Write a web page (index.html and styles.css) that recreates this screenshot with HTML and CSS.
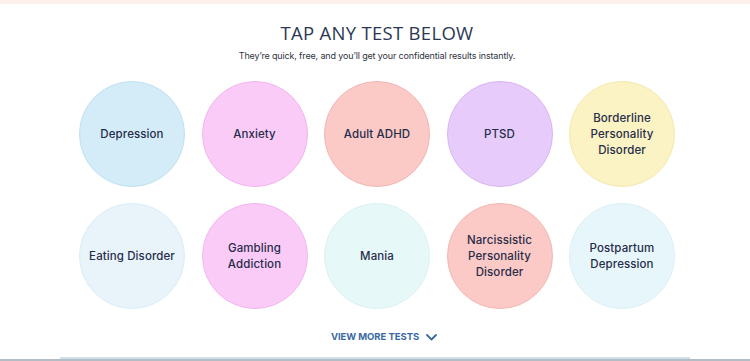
FILE: index.html
```html
<!DOCTYPE html>
<html>
<head>
<meta charset="utf-8">
<link rel="stylesheet" href="styles.css">
</head>
<body>
<div class="topbar"></div>
<section class="tests">
  <h1 class="title">TAP ANY TEST BELOW</h1>
  <p class="subtitle">They’re quick, free, and you’ll get your confidential results instantly.</p>
  <div class="grid">
    <a class="circle c-blue">Depression</a>
    <a class="circle c-pink">Anxiety</a>
    <a class="circle c-salmon">Adult ADHD</a>
    <a class="circle c-purple">PTSD</a>
    <a class="circle c-yellow">Borderline<br>Personality<br>Disorder</a>
    <a class="circle c-ice">Eating Disorder</a>
    <a class="circle c-pink">Gambling<br>Addiction</a>
    <a class="circle c-mint">Mania</a>
    <a class="circle c-salmon">Narcissistic<br>Personality<br>Disorder</a>
    <a class="circle c-ice2">Postpartum<br>Depression</a>
  </div>
  <div class="more">
    <span>VIEW MORE TESTS</span>
    <svg class="chev" width="11" height="7" viewBox="0 0 11 7"><path d="M1 1 L5.5 5.5 L10 1" fill="none" stroke="#3a6aa0" stroke-width="1.8" stroke-linecap="round" stroke-linejoin="round"/></svg>
  </div>
</section>
<div class="bottom">
  <div class="card-top"></div>
</div>
</body>
</html>
```
FILE: styles.css
```css
html, body {
  margin: 0;
  padding: 0;
  background: #ffffff;
}
body {
  width: 750px;
  height: 361px;
  overflow: hidden;
  font-family: "Open Sans", "Liberation Sans", sans-serif;
}
.topbar {
  height: 4px;
  background: #fdf0ea;
}
.tests {
  display: flex;
  flex-direction: column;
  align-items: center;
  padding-left: 4px;
}
.title {
  margin: 17px 0 0;
  font-family: "Open Sans", sans-serif;
  font-weight: 400;
  font-size: 18.5px;
  line-height: 24px;
  letter-spacing: 0.3px;
  color: #2b3853;
}
.subtitle {
  margin: 4px 0 0;
  font-family: "Inter", sans-serif;
  font-size: 9px;
  line-height: 14px;
  color: #2f3440;
  letter-spacing: -0.15px;
}
.grid {
  margin-top: 18px;
  display: grid;
  grid-template-columns: repeat(5, 106px);
  column-gap: 16.5px;
  row-gap: 16px;
}
.circle {
  width: 106px;
  height: 106px;
  box-sizing: border-box;
  border-radius: 50%;
  display: flex;
  align-items: center;
  justify-content: center;
  text-align: center;
  font-family: "Inter", "Open Sans", sans-serif;
  font-weight: 500;
  font-size: 11.5px;
  line-height: 16px;
  letter-spacing: 0.1px;
  color: #262d4a;
  border: 1px solid;
}
.c-blue { background: #d3ecf8; border-color: #bfe2f3; }
.c-pink { background: #fbcbf8; border-color: #f2b6ef; }
.c-salmon { background: #fbc9c6; border-color: #f3b7b3; }
.c-purple { background: #e7cbfb; border-color: #dab6f5; }
.c-yellow { background: #fbf3c3; border-color: #f3e9ae; }
.c-ice { background: #e8f4fa; border-color: #dbeef7; }
.c-mint { background: #e7f8f8; border-color: #dcf2f2; }
.c-ice2 { background: #e7f6fa; border-color: #dcf0f6; }
.more {
  margin-top: 21px;
  margin-left: 14px;
  display: flex;
  align-items: center;
  gap: 7px;
  font-family: "Inter", sans-serif;
  font-weight: 700;
  font-size: 9.5px;
  line-height: 14px;
  color: #3a6aa0;
  letter-spacing: -0.05px;
}
.chev { display: block; }
.bottom {
  position: absolute;
  left: 0;
  right: 0;
  top: 357px;
  height: 4px;
  border-bottom: 2px solid #b4bcc4;
  box-sizing: border-box;
}
.card-top {
  margin: 0 60px;
  height: 2px;
  background: #cfe2ec;
}
```
